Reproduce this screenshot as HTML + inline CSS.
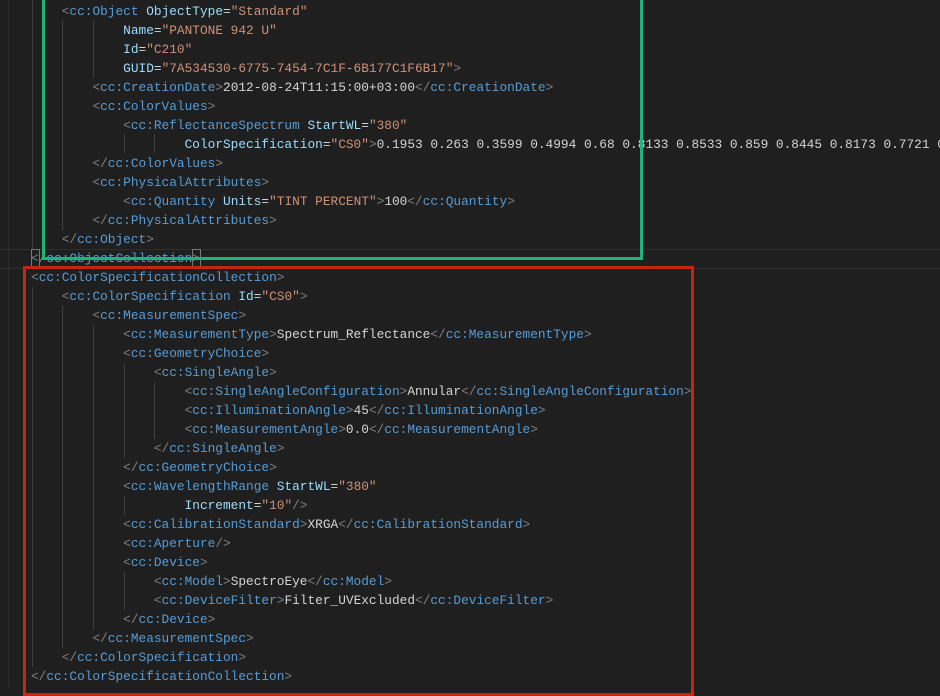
<!DOCTYPE html>
<html><head><meta charset="utf-8"><style>
html,body{margin:0;padding:0;background:#1f1f1f;width:940px;height:687px;overflow:hidden}
pre{position:absolute;left:31px;top:2px;margin:0;font-family:"Liberation Mono",monospace;font-size:12.8px;line-height:19px;color:#d4d4d4;white-space:pre}
.p{color:#808080}.t{color:#569cd6}.a{color:#9cdcfe}.s{color:#ce9178}
.box{position:absolute;box-sizing:border-box}
.g{position:absolute;width:1px;background:#404040}
</style></head><body>
<div style="position:absolute;left:8px;top:0;width:1px;height:687px;background:#2b2b2b"></div>
<div style="position:absolute;left:0;top:249px;width:940px;height:18px;border-top:1px solid #2e2e2e;border-bottom:1px solid #2e2e2e"></div>
<div class="g" style="left:32px;top:0;height:249px"></div>
<div class="g" style="left:32px;top:287px;height:380px"></div>
<div class="g" style="left:62px;top:20px;height:210px"></div>
<div class="g" style="left:62px;top:306px;height:342px"></div>
<div class="g" style="left:93px;top:20px;height:57px"></div>
<div class="g" style="left:93px;top:325px;height:304px"></div>
<div class="g" style="left:124px;top:134px;height:19px"></div>
<div class="g" style="left:124px;top:363px;height:95px"></div>
<div class="g" style="left:124px;top:496px;height:19px"></div>
<div class="g" style="left:124px;top:572px;height:38px"></div>
<div class="g" style="left:154px;top:134px;height:19px"></div>
<div class="g" style="left:154px;top:382px;height:57px"></div>
<pre><span class="p">    &lt;</span><span class="t">cc:Object</span> <span class="a">ObjectType</span>=<span class="s">"Standard"</span>
            <span class="a">Name</span>=<span class="s">"PANTONE 942 U"</span>
            <span class="a">Id</span>=<span class="s">"C210"</span>
            <span class="a">GUID</span>=<span class="s">"7A534530-6775-7454-7C1F-6B177C1F6B17"</span><span class="p">&gt;</span>
        <span class="p">&lt;</span><span class="t">cc:CreationDate</span><span class="p">&gt;</span>2012-08-24T11:15:00+03:00<span class="p">&lt;/</span><span class="t">cc:CreationDate</span><span class="p">&gt;</span>
        <span class="p">&lt;</span><span class="t">cc:ColorValues</span><span class="p">&gt;</span>
            <span class="p">&lt;</span><span class="t">cc:ReflectanceSpectrum</span> <span class="a">StartWL</span>=<span class="s">"380"</span>
                    <span class="a">ColorSpecification</span>=<span class="s">"CS0"</span><span class="p">&gt;</span>0.1953 0.263 0.3599 0.4994 0.68 0.8133 0.8533 0.859 0.8445 0.8173 0.7721 0
        <span class="p">&lt;/</span><span class="t">cc:ColorValues</span><span class="p">&gt;</span>
        <span class="p">&lt;</span><span class="t">cc:PhysicalAttributes</span><span class="p">&gt;</span>
            <span class="p">&lt;</span><span class="t">cc:Quantity</span> <span class="a">Units</span>=<span class="s">"TINT PERCENT"</span><span class="p">&gt;</span>100<span class="p">&lt;/</span><span class="t">cc:Quantity</span><span class="p">&gt;</span>
        <span class="p">&lt;/</span><span class="t">cc:PhysicalAttributes</span><span class="p">&gt;</span>
    <span class="p">&lt;/</span><span class="t">cc:Object</span><span class="p">&gt;</span>
<span class="p">&lt;/</span><span class="t">cc:ObjectCollection</span><span class="p">&gt;</span>
<span class="p">&lt;</span><span class="t">cc:ColorSpecificationCollection</span><span class="p">&gt;</span>
    <span class="p">&lt;</span><span class="t">cc:ColorSpecification</span> <span class="a">Id</span>=<span class="s">"CS0"</span><span class="p">&gt;</span>
        <span class="p">&lt;</span><span class="t">cc:MeasurementSpec</span><span class="p">&gt;</span>
            <span class="p">&lt;</span><span class="t">cc:MeasurementType</span><span class="p">&gt;</span>Spectrum_Reflectance<span class="p">&lt;/</span><span class="t">cc:MeasurementType</span><span class="p">&gt;</span>
            <span class="p">&lt;</span><span class="t">cc:GeometryChoice</span><span class="p">&gt;</span>
                <span class="p">&lt;</span><span class="t">cc:SingleAngle</span><span class="p">&gt;</span>
                    <span class="p">&lt;</span><span class="t">cc:SingleAngleConfiguration</span><span class="p">&gt;</span>Annular<span class="p">&lt;/</span><span class="t">cc:SingleAngleConfiguration</span><span class="p">&gt;</span>
                    <span class="p">&lt;</span><span class="t">cc:IlluminationAngle</span><span class="p">&gt;</span>45<span class="p">&lt;/</span><span class="t">cc:IlluminationAngle</span><span class="p">&gt;</span>
                    <span class="p">&lt;</span><span class="t">cc:MeasurementAngle</span><span class="p">&gt;</span>0.0<span class="p">&lt;/</span><span class="t">cc:MeasurementAngle</span><span class="p">&gt;</span>
                <span class="p">&lt;/</span><span class="t">cc:SingleAngle</span><span class="p">&gt;</span>
            <span class="p">&lt;/</span><span class="t">cc:GeometryChoice</span><span class="p">&gt;</span>
            <span class="p">&lt;</span><span class="t">cc:WavelengthRange</span> <span class="a">StartWL</span>=<span class="s">"380"</span>
                    <span class="a">Increment</span>=<span class="s">"10"</span><span class="p">/&gt;</span>
            <span class="p">&lt;</span><span class="t">cc:CalibrationStandard</span><span class="p">&gt;</span>XRGA<span class="p">&lt;/</span><span class="t">cc:CalibrationStandard</span><span class="p">&gt;</span>
            <span class="p">&lt;</span><span class="t">cc:Aperture</span><span class="p">/&gt;</span>
            <span class="p">&lt;</span><span class="t">cc:Device</span><span class="p">&gt;</span>
                <span class="p">&lt;</span><span class="t">cc:Model</span><span class="p">&gt;</span>SpectroEye<span class="p">&lt;/</span><span class="t">cc:Model</span><span class="p">&gt;</span>
                <span class="p">&lt;</span><span class="t">cc:DeviceFilter</span><span class="p">&gt;</span>Filter_UVExcluded<span class="p">&lt;/</span><span class="t">cc:DeviceFilter</span><span class="p">&gt;</span>
            <span class="p">&lt;/</span><span class="t">cc:Device</span><span class="p">&gt;</span>
        <span class="p">&lt;/</span><span class="t">cc:MeasurementSpec</span><span class="p">&gt;</span>
    <span class="p">&lt;/</span><span class="t">cc:ColorSpecification</span><span class="p">&gt;</span>
<span class="p">&lt;/</span><span class="t">cc:ColorSpecificationCollection</span><span class="p">&gt;</span></pre>
<div class="box" style="left:31px;top:249px;width:9px;height:18px;border:1px solid #777"></div>
<div class="box" style="left:192px;top:249px;width:9px;height:18px;border:1px solid #777"></div>
<div class="box" style="left:42px;top:-4px;width:601px;height:264px;border:3px solid #1fb37a"></div>
<div class="box" style="left:23px;top:266px;width:671px;height:430px;border:3px solid #c3280e"></div>
</body></html>
